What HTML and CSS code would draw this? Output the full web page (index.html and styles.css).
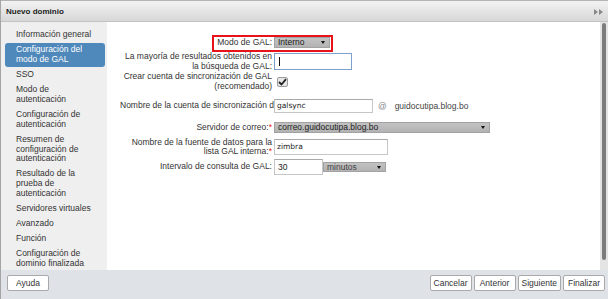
FILE: index.html
```html
<!DOCTYPE html>
<html>
<head>
  <meta charset="UTF-8">
  <title>Nuevo dominio</title>
  <link rel="stylesheet" href="styles.css">
</head>
<body>
  <div class="window">
    <div class="titlebar">
      <span class="title">Nuevo dominio</span>
      <svg class="collapse" width="9" height="6" viewBox="0 0 9 6">
        <path d="M0 0 L4 3 L0 6 Z M5 0 L9 3 L5 6 Z" fill="#8a8a8a"/>
      </svg>
    </div>

    <div class="main">
      <ul class="nav">
        <li>Información general</li>
        <li class="active">Configuración del modo de GAL</li>
        <li>SSO</li>
        <li>Modo de autenticación</li>
        <li>Configuración de autenticación</li>
        <li>Resumen de configuración de autenticación</li>
        <li>Resultado de la prueba de autenticación</li>
        <li>Servidores virtuales</li>
        <li>Avanzado</li>
        <li>Función</li>
        <li>Configuración de dominio finalizada</li>
      </ul>

      <div class="content">
        <div class="highlight"></div>
        <div class="form">
          <div class="row row-mode">
            <div class="label">Modo de GAL:</div>
            <div class="select select-mode">Interno<span class="arrow"></span></div>
          </div>

          <div class="row row-limit">
            <div class="label">La mayoría de resultados obtenidos en la búsqueda de GAL:</div>
            <div class="input input-focus input-limit"><span class="caret"></span></div>
          </div>

          <div class="row row-check">
            <div class="label">Crear cuenta de sincronización de GAL (recomendado)</div>
            <div class="checkbox">
              <svg width="9" height="8" viewBox="0 0 9 8">
                <path d="M1 4 L3.5 6.5 L8 1.2" fill="none" stroke="#222" stroke-width="1.8"/>
              </svg>
            </div>
          </div>

          <div class="row row-account">
            <div class="label label-clip">Nombre de la cuenta de sincronización de GAL:</div>
            <div class="input input-account mono">galsync</div>
            <span class="at">@</span>
            <span class="domain">guidocutipa.blog.bo</span>
          </div>

          <div class="row row-server">
            <div class="label">Servidor de correo:<span class="req">*</span></div>
            <div class="select select-server">correo.guidocutipa.blog.bo<span class="arrow"></span></div>
          </div>

          <div class="row row-source">
            <div class="label">Nombre de la fuente de datos para la lista GAL interna:<span class="req">*</span></div>
            <div class="input input-source mono">zimbra</div>
          </div>

          <div class="row row-interval">
            <div class="label">Intervalo de consulta de GAL:</div>
            <div class="input input-interval">30</div>
            <div class="select select-unit">minutos<span class="arrow"></span></div>
          </div>
        </div>
      </div>

      <div class="scroll"><div class="thumb"></div></div>
    </div>

    <div class="footer">
      <button>Ayuda</button>
      <div class="actions">
        <button>Cancelar</button>
        <button>Anterior</button>
        <button>Siguiente</button>
        <button>Finalizar</button>
      </div>
    </div>
  </div>
</body>
</html>
```

FILE: styles.css
```css
* {
  box-sizing: border-box;
}
body {
  margin: 0;
  width: 608px;
  height: 299px;
  overflow: hidden;
  font-family: 'Liberation Sans', Arial, sans-serif;
  font-size: 8.5px;
  color: #333;
  background-color: #dfe3e8;
}
.window {
  display: flex;
  flex-direction: column;
  height: 299px;
  border-left: 1px solid #a4a4a4;
}
.titlebar {
  height: 22px;
  flex: none;
  display: flex;
  align-items: center;
  justify-content: space-between;
  padding: 0 5px 0 5px;
  background: linear-gradient(#f3f3f3, #d7d7d7);
  border-top: 1px solid #b4b4b4;
  border-bottom: 1px solid #c2c2c2;
}
.title {
  font-weight: bold;
  font-size: 8px;
  color: #222;
}
.collapse {
  margin-top: 1px;
}
.main {
  flex: 1;
  display: flex;
  min-height: 0;
}
.nav {
  list-style: none;
  margin: 0;
  width: 106px;
  flex: none;
  padding: 5.5px 2px 0 4px;
  background-color: #efefef;
  overflow: hidden;
}
.nav li {
  padding: 2.8px 11px;
  line-height: 9.6px;
}
.nav li.active {
  background-color: #4f88bb;
  color: #fff;
  border-radius: 3px;
}
.content {
  flex: 1;
  position: relative;
  background-color: #fff;
  overflow: hidden;
}
.highlight {
  position: absolute;
  left: 105px;
  top: 13px;
  width: 121px;
  height: 17px;
  border: 2px solid #e8121a;
}
.form {
  display: flex;
  flex-direction: column;
  padding: 12px 0 0 13px;
}
.row {
  display: flex;
  align-items: center;
}
.label {
  width: 152px;
  flex: none;
  margin-right: 2px;
  text-align: right;
  line-height: 9.5px;
  color: #333;
}
.label-clip {
  width: 154px;
  margin-right: 0;
  white-space: nowrap;
  overflow: hidden;
  text-align: left;
}
.req {
  color: #e02020;
}
.row-mode {
  height: 17px;
}
.row-limit {
  height: 17px;
  margin-top: 2px;
}
.row-check {
  height: 21px;
  margin-top: 1px;
}
.row-account {
  height: 14px;
  margin-top: 7px;
}
.row-server {
  height: 13px;
  margin-top: 8px;
}
.row-source {
  height: 16px;
  margin-top: 5px;
}
.row-interval {
  height: 16px;
  margin-top: 4px;
}
.select {
  position: relative;
  height: 11px;
  line-height: 9px;
  padding-left: 3px;
  background: linear-gradient(#c2c2c2, #b3b3b3);
  border: 1px solid #a2a2a2;
  color: #222;
}
.arrow {
  position: absolute;
  right: 4px;
  top: 3px;
  border-left: 2.5px solid transparent;
  border-right: 2.5px solid transparent;
  border-top: 3px solid #111;
}
.select-mode {
  width: 56px;
}
.select-server {
  width: 216px;
}
.select-unit {
  width: 63px;
  height: 10px;
  line-height: 8px;
  color: #444;
}
.input {
  background-color: #fff;
  border: 1px solid #c6c6c6;
  border-top-color: #a9a9a9;
  padding-left: 3px;
  color: #222;
}
.input-focus {
  position: relative;
  width: 78px;
  height: 17px;
  border: 1px solid #7da0cd;
}
.caret {
  position: absolute;
  left: 4px;
  top: 3px;
  width: 1px;
  height: 9px;
  background-color: #111;
}
.checkbox {
  width: 11px;
  height: 10px;
  margin-left: 3px;
  margin-top: 1px;
  display: flex;
  align-items: center;
  justify-content: center;
  background-color: #e6e6e6;
  border: 1px solid #9c9c9c;
  border-radius: 2px;
}
.mono {
  font-family: 'DejaVu Sans', sans-serif;
  font-size: 7.5px;
}
.input-account {
  width: 99px;
  height: 14px;
  line-height: 12px;
  padding-left: 2px;
}
.at {
  margin-left: 5px;
  color: #888;
}
.domain {
  margin-left: 8px;
  color: #444;
}
.input-source {
  width: 114px;
  height: 16px;
  line-height: 13px;
  padding-left: 2px;
}
.input-interval {
  width: 49px;
  height: 16px;
  line-height: 14px;
  font-size: 8.5px;
}
.scroll {
  width: 8px;
  flex: none;
  background-color: #e4e4e4;
  padding: 1px 2px 10px 2px;
}
.thumb {
  height: 100%;
  background-color: #7c7c7c;
  border-radius: 2px;
}
.footer {
  height: 29px;
  flex: none;
  display: flex;
  justify-content: space-between;
  align-items: flex-start;
  padding: 5px 3px 0 6px;
  background-color: #dfe3e8;
}
.actions {
  display: flex;
  gap: 2px;
}
button {
  height: 16px;
  min-width: 42px;
  padding: 0 3px;
  font-family: 'Liberation Sans', Arial, sans-serif;
  font-size: 8.5px;
  color: #333;
  background-color: #fff;
  border: 1px solid #a9a9a9;
  border-radius: 2px;
}
```
